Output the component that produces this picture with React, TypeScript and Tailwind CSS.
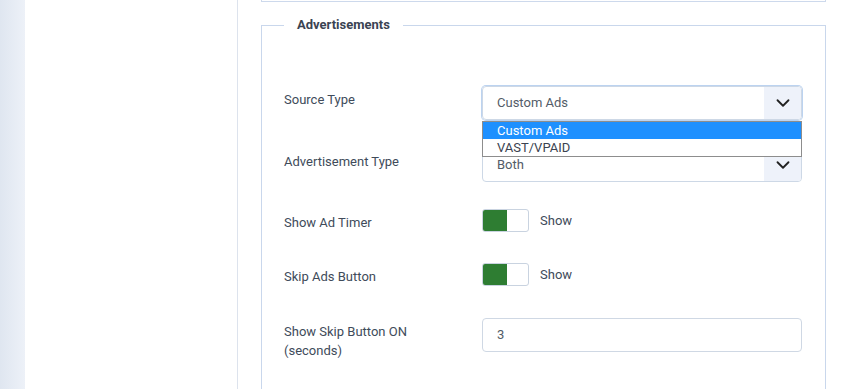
import { ChevronDown } from "lucide-react";

const font = { fontFamily: "Roboto, 'Liberation Sans', sans-serif" };

function SelectBox({ value }: { value: string }) {
  return (
    <div className="flex h-[34px] w-[320px] items-stretch overflow-hidden rounded-[4px] border border-[#cdd8e6] bg-white">
      <div className="flex flex-1 items-center pl-[14px] text-[13px] text-[#535c68]">{value}</div>
      <div className="flex w-[37px] items-center justify-center bg-[#eef2fa]">
        <ChevronDown className="h-[22px] w-[22px] text-[#222]" strokeWidth={2} />
      </div>
    </div>
  );
}

function Toggle() {
  return (
    <div className="flex items-center">
      <div className="flex h-[23px] w-[47px] overflow-hidden rounded-[3px] border border-[#c9d3e0] bg-white">
        <div className="w-[24px] bg-[#2e7d32]" />
      </div>
      <span className="ml-[11px] text-[13px] text-[#404b5a]">Show</span>
    </div>
  );
}

function Row({ label, children, className }: { label: string; children: React.ReactNode; className?: string }) {
  return (
    <div className={"flex items-start " + (className ?? "")}>
      <div className="w-[198px] pr-[48px] pt-[4px] text-[13px] leading-[19px] text-[#404b5a]">{label}</div>
      {children}
    </div>
  );
}

export default function App() {
  return (
    <div className="flex h-[389px] w-[848px] overflow-hidden bg-white" style={font}>
      <div className="w-[25px] bg-gradient-to-r from-[#dfe6f0] to-[#edf1f8]" />
      <div className="w-[213px] border-r border-[#dde3ed] bg-white" />
      <div className="flex-1 pl-[23px] pr-[22px]">
        <div className="h-[2px] border-x border-b border-[#cdd9ec]" />
        <fieldset className="mt-[13px] h-[400px] border border-[#c9d7ec] px-[22px]">
          <legend className="px-[13px] text-[13px] font-bold leading-[20px] text-[#3a4352]">
            Advertisements
          </legend>
          <div className="flex flex-col pt-[51px]">
            <Row label="Source Type">
              <div className="relative">
                <div className="rounded-[4px] shadow-[0_0_0_1px_#bcd3f0]">
                  <SelectBox value="Custom Ads" />
                </div>
                <div className="absolute left-0 top-[35px] z-10 w-[320px] border border-[#8d8d8d] bg-white text-[13px] leading-[17px]">
                  <div className="bg-[#1e90ff] pl-[14px] text-white">Custom Ads</div>
                  <div className="pl-[14px] text-[#3b4350]">VAST/VPAID</div>
                </div>
              </div>
            </Row>
            <Row label="Advertisement Type" className="mt-[28px]">
              <SelectBox value="Both" />
            </Row>
            <Row label="Show Ad Timer" className="mt-[27px]">
              <Toggle />
            </Row>
            <Row label="Skip Ads Button" className="mt-[31px]">
              <Toggle />
            </Row>
            <Row label="Show Skip Button ON (seconds)" className="mt-[32px]">
              <div className="flex h-[34px] w-[320px] items-center rounded-[4px] border border-[#cfd8e4] pl-[14px] text-[13px] text-[#535c68]">
                3
              </div>
            </Row>
          </div>
        </fieldset>
      </div>
    </div>
  );
}
